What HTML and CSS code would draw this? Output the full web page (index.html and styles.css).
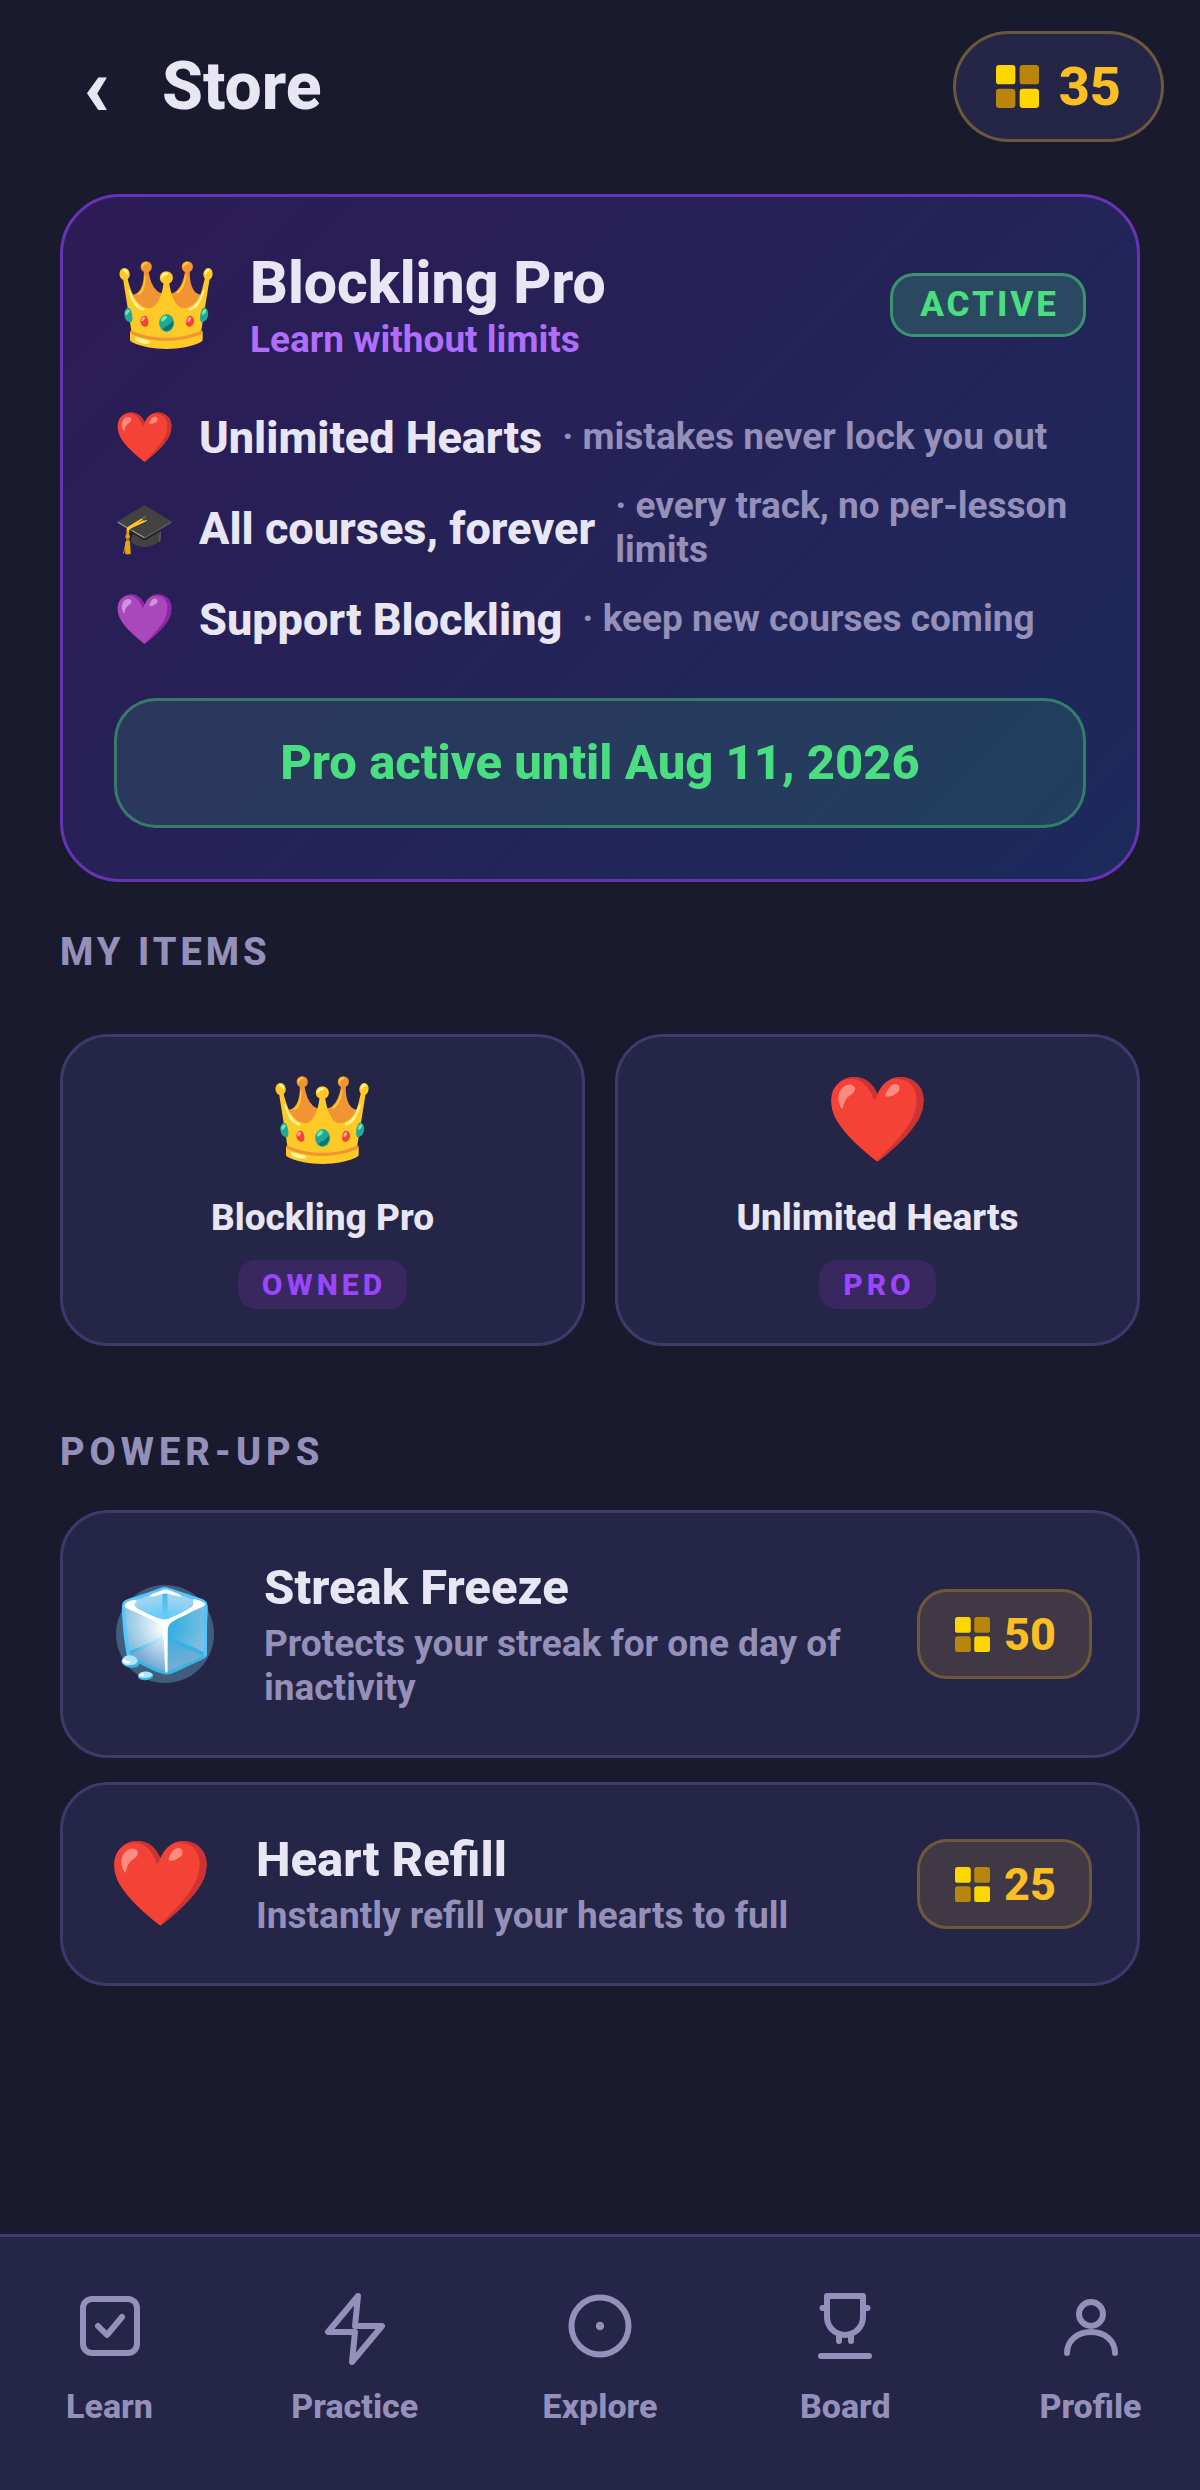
FILE: index.html
```html
<!DOCTYPE html>
<html lang="en">
<head>
  <meta charset="UTF-8" />
  <meta name="viewport" content="width=device-width, initial-scale=1" />
  <title>Blockling - Store</title>
  <link rel="stylesheet" href="styles.css">
</head>
<body>
  <svg class="defs" aria-hidden="true">
    <symbol id="coin" viewBox="0 0 20 20">
      <rect x="0" y="0" width="9" height="9" rx="1.5" fill="#ffd700" />
      <rect x="11" y="0" width="9" height="9" rx="1.5" fill="#b8860b" />
      <rect x="0" y="11" width="9" height="9" rx="1.5" fill="#b8860b" />
      <rect x="11" y="11" width="9" height="9" rx="1.5" fill="#ffd700" />
    </symbol>
  </svg>

  <header class="topbar">
    <button type="button" class="back" aria-label="Back">‹</button>
    <h1>Store</h1>
    <div class="balance">
      <svg class="coin-lg" aria-hidden="true"><use href="#coin" /></svg>
      <span>35</span>
    </div>
  </header>

  <main class="content">
    <section class="pro-card">
      <div class="pro-head">
        <span class="emoji emoji-lg">👑</span>
        <div class="pro-title">
          <h2>Blockling Pro</h2>
          <p>Learn without limits</p>
        </div>
        <span class="active-badge">ACTIVE</span>
      </div>
      <ul class="benefits">
        <li><span class="emoji emoji-sm">❤️</span><strong>Unlimited Hearts</strong><span class="note">· mistakes never lock you out</span></li>
        <li><span class="emoji emoji-sm">🎓</span><strong>All courses, forever</strong><span class="note">· every track, no per-lesson limits</span></li>
        <li><span class="emoji emoji-sm">💜</span><strong>Support Blockling</strong><span class="note">· keep new courses coming</span></li>
      </ul>
      <button type="button" class="pro-status">Pro active until Aug 11, 2026</button>
    </section>

    <h3 class="section-title">MY ITEMS</h3>
    <div class="items">
      <article class="item">
        <span class="emoji emoji-lg">👑</span>
        <h4>Blockling Pro</h4>
        <span class="tag">OWNED</span>
      </article>
      <article class="item">
        <span class="emoji emoji-lg">❤️</span>
        <h4>Unlimited Hearts</h4>
        <span class="tag">PRO</span>
      </article>
    </div>

    <h3 class="section-title power-title">POWER-UPS</h3>
    <div class="powerups">
      <article class="powerup">
        <span class="frost"><span class="emoji emoji-lg">🧊</span></span>
        <div class="powerup-text">
          <h4>Streak Freeze</h4>
          <p>Protects your streak for one day of inactivity</p>
        </div>
        <button type="button" class="price">
          <svg class="coin-sm" aria-hidden="true"><use href="#coin" /></svg>50
        </button>
      </article>
      <article class="powerup">
        <span class="emoji emoji-lg">❤️</span>
        <div class="powerup-text">
          <h4>Heart Refill</h4>
          <p>Instantly refill your hearts to full</p>
        </div>
        <button type="button" class="price">
          <svg class="coin-sm" aria-hidden="true"><use href="#coin" /></svg>25
        </button>
      </article>
    </div>
  </main>

  <nav class="tabbar" aria-label="Main">
    <a href="#learn">
      <svg viewBox="0 0 24 24"><rect x="3" y="3" width="18" height="18" rx="3" /><path d="M8 12l3 3 5-6" /></svg>
      Learn
    </a>
    <a href="#practice">
      <svg viewBox="0 0 24 24"><path d="M13 2L3 14h9l-1 10 10-12h-9z" /></svg>
      Practice
    </a>
    <a href="#explore">
      <svg viewBox="0 0 24 24"><circle cx="12" cy="12" r="9.5" /><circle class="dot" cx="12" cy="12" r="1.4" /></svg>
      Explore
    </a>
    <a href="#board">
      <svg viewBox="0 0 24 24"><path d="M6 2h12v7a6 6 0 0 1-12 0zM6 6H4.5M18 6h1.5M10 15v2M14 15v2M4 22h16" /></svg>
      Board
    </a>
    <a href="#profile">
      <svg viewBox="0 0 24 24"><circle cx="12" cy="8" r="4" /><path d="M4 21c0-4.2 3.6-7 8-7s8 2.8 8 7" /></svg>
      Profile
    </a>
  </nav>
</body>
</html>
```
FILE: styles.css
```css
:root {
  --bg: #1a1a2e;
  --card: #252547;
  --border: #3d3b6b;
  --text: #e8e6f3;
  --muted: #9490ba;
  --gold: #fbbf24;
  --green: #4ade80;
  --purple: #9b45ff;
}

* {
  box-sizing: border-box;
}

body {
  margin: 0;
  min-height: 100vh;
  display: flex;
  flex-direction: column;
  background: var(--bg);
  color: var(--text);
  font-family: Roboto, "Noto Sans", sans-serif;
}

h1, h2, h3, h4, p, ul {
  margin: 0;
  padding: 0;
}

button {
  font-family: inherit;
  cursor: pointer;
}

.defs {
  display: none;
}

.emoji {
  flex: none;
  line-height: 1;
}

.emoji-lg {
  font-size: 84px;
}

.emoji-sm {
  font-size: 49px;
}

.topbar {
  display: flex;
  align-items: center;
  padding: 31px 36px 52px 60px;
}

.back {
  width: 72px;
  padding: 0;
  border: 0;
  background: none;
  color: var(--text);
  font-size: 84px;
  font-weight: 900;
  line-height: 84px;
}

.topbar h1 {
  flex: 1;
  margin-left: 30px;
  font-size: 66px;
  font-weight: 800;
  line-height: 78px;
}

.balance {
  display: flex;
  align-items: center;
  gap: 20px;
  height: 111px;
  padding: 0 40px;
  border: 3px solid rgba(251, 191, 36, 0.33);
  border-radius: 56px;
  background: var(--card);
  color: var(--gold);
  font-size: 54px;
  font-weight: 800;
}

.coin-lg {
  width: 43px;
  height: 43px;
}

.coin-sm {
  width: 35px;
  height: 35px;
}

.content {
  flex: 1;
  padding: 0 60px;
}

.pro-card {
  padding: 51px;
  border: 3px solid #6733b5;
  border-radius: 60px;
  background: linear-gradient(135deg, #2d1b54, #1c2a5c);
}

.pro-head {
  display: flex;
  align-items: center;
  gap: 31px;
}

.pro-title {
  flex: 1;
}

.pro-title h2 {
  font-size: 59px;
  font-weight: 800;
  line-height: 70px;
}

.pro-title p {
  color: #b06dff;
  font-size: 37px;
  font-weight: 700;
  line-height: 44px;
}

.active-badge {
  padding: 9px 24px 9px 27px;
  border: 3px solid rgba(74, 222, 128, 0.5);
  border-radius: 24px;
  background: rgba(74, 222, 128, 0.2);
  color: var(--green);
  font-size: 35px;
  font-weight: 800;
  line-height: 40px;
  letter-spacing: 3px;
}

.benefits {
  display: flex;
  flex-direction: column;
  gap: 15px;
  margin: 43px 0 47px;
  list-style: none;
}

.benefits li {
  display: flex;
  align-items: center;
  min-height: 64px;
}

.benefits strong {
  flex: none;
  margin: 0 20px 0 24px;
  font-size: 45px;
  font-weight: 800;
}

.note {
  color: var(--muted);
  font-size: 37px;
  font-weight: 700;
  line-height: 44px;
}

.pro-status {
  display: block;
  width: 100%;
  padding: 32px;
  border: 3px solid rgba(74, 222, 128, 0.4);
  border-radius: 42px;
  background: rgba(74, 222, 128, 0.12);
  color: var(--green);
  font-size: 49px;
  font-weight: 800;
  line-height: 60px;
}

.section-title {
  margin: 48px 0 59px;
  color: var(--muted);
  font-size: 38px;
  font-weight: 800;
  line-height: 45px;
  letter-spacing: 4px;
}

.power-title {
  margin: 84px 0 35px;
  letter-spacing: 5px;
}

.items {
  display: grid;
  grid-template-columns: 1fr 1fr;
  gap: 30px;
}

.item {
  display: flex;
  flex-direction: column;
  align-items: center;
  padding: 41px 24px 34px;
  border: 3px solid var(--border);
  border-radius: 48px;
  background: var(--card);
}

.item h4 {
  margin: 32px 0 18px;
  font-size: 37px;
  font-weight: 800;
  line-height: 48px;
}

.tag {
  padding: 6px 21px 6px 24px;
  border-radius: 18px;
  background: #38285f;
  color: var(--purple);
  font-size: 30px;
  font-weight: 800;
  line-height: 37px;
  letter-spacing: 4px;
}

.powerups {
  display: flex;
  flex-direction: column;
  gap: 24px;
}

.powerup {
  display: flex;
  align-items: center;
  gap: 43px;
  padding: 45px;
  border: 3px solid var(--border);
  border-radius: 48px;
  background: var(--card);
}

.frost {
  flex: none;
  display: flex;
  align-items: center;
  justify-content: center;
  width: 98px;
  height: 98px;
  margin: 0 7px 0 8px;
  border-radius: 50%;
  background: #3f5e7e;
}

.powerup-text {
  flex: 1;
}

.powerup h4 {
  margin-bottom: 4px;
  font-size: 49px;
  font-weight: 800;
  line-height: 60px;
}

.powerup p {
  color: var(--muted);
  font-size: 37px;
  font-weight: 700;
  line-height: 44px;
}

.price {
  display: flex;
  align-items: center;
  gap: 14px;
  height: 90px;
  padding: 0 33px 0 35px;
  border: 3px solid #6e583a;
  border-radius: 30px;
  background: #413845;
  color: var(--gold);
  font-size: 45px;
  font-weight: 800;
}

.tabbar {
  display: flex;
  justify-content: space-between;
  padding: 53px 0 60px;
  border-top: 3px solid var(--border);
  background: var(--card);
}

.tabbar a {
  display: flex;
  flex-direction: column;
  align-items: center;
  gap: 20px;
  width: 219px;
  color: var(--muted);
  font-size: 34px;
  font-weight: 800;
  line-height: 48px;
  text-decoration: none;
}

.tabbar svg {
  width: 72px;
  height: 72px;
  overflow: visible;
  fill: none;
  stroke: currentColor;
  stroke-width: 2;
  stroke-linecap: round;
  stroke-linejoin: round;
}

.tabbar .dot {
  fill: currentColor;
  stroke: none;
}
```
